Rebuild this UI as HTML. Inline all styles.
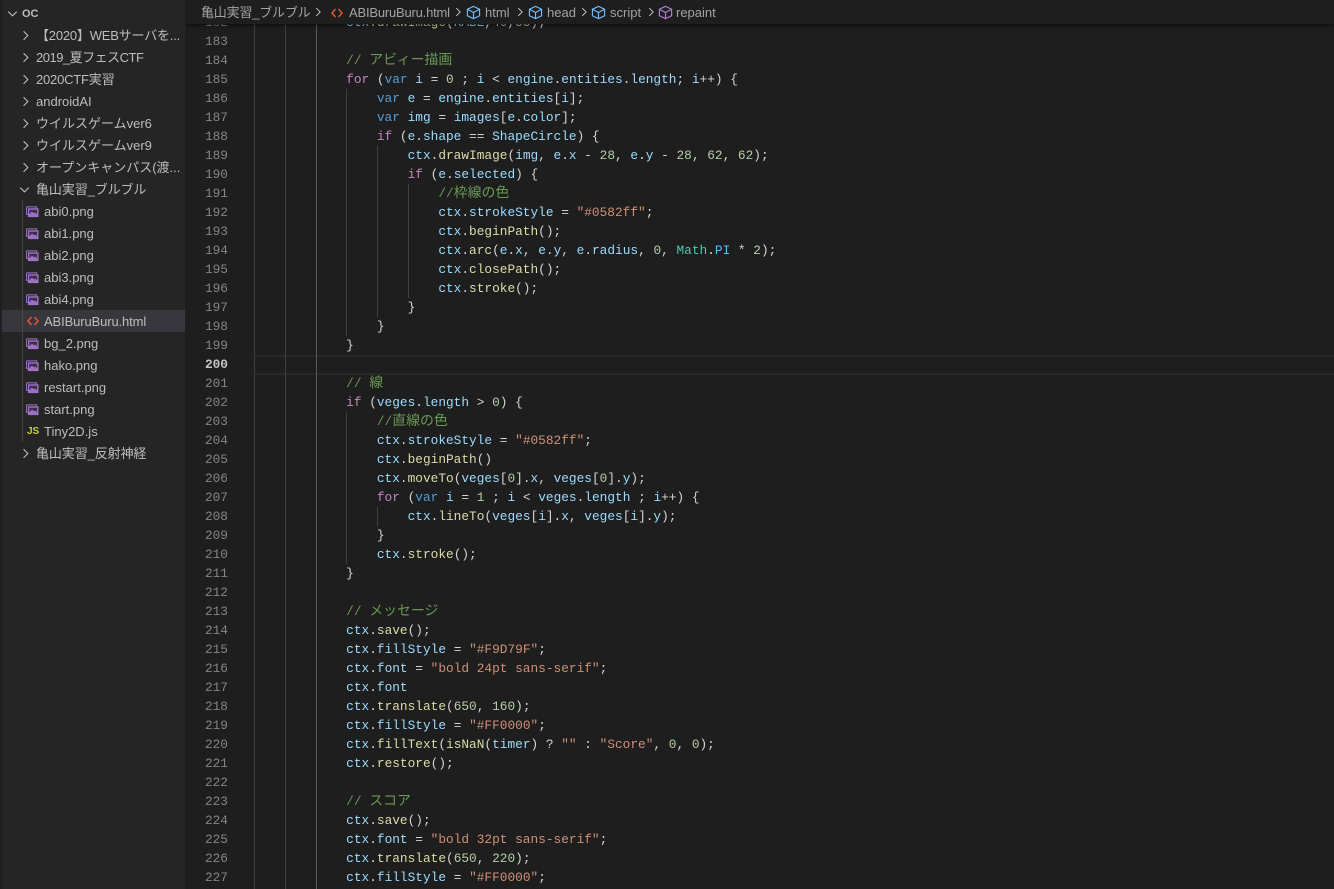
<!DOCTYPE html>
<html lang="ja"><head><meta charset="utf-8"><title>ABIBuruBuru.html</title>
<style>
html,body{margin:0;padding:0;width:1334px;height:889px;overflow:hidden;background:#1e1e1e}
body{position:relative;font-family:"Liberation Sans","Noto Sans CJK JP",sans-serif}
#side{position:absolute;left:0;top:0;width:185px;height:889px;background:#252526;box-sizing:border-box}
.r{position:absolute;left:0;height:22px;line-height:22px;font-size:13px;color:#bdbdbd;white-space:nowrap;width:185px}
.r span{position:absolute;top:1px}
.t{left:36px}.f{left:44px}
.r svg{position:absolute}
.sel{position:absolute;left:2px;top:310px;width:183px;height:22px;background:#37373d}
#tg{position:absolute;left:22px;top:200px;width:1px;height:242px;background:#454545}
#code{position:absolute;left:254px;top:13px;margin:0;font:12.8px/19px "Liberation Mono","Noto Sans CJK JP",monospace;color:#d4d4d4;white-space:pre}
#nums{position:absolute;left:190px;width:38px;top:13px;text-align:right;font:12.8px/19px "Liberation Mono",monospace;color:#858585}
#nums b{font-weight:bold;color:#c6c6c6}
.g{position:absolute;width:1px;background:#404040}
#cur{position:absolute;left:254px;top:355px;width:1080px;height:16px;border-top:2px solid #282828;border-bottom:2px solid #282828}
#head{position:absolute;left:185px;top:0;width:1149px;height:24px;background:#1e1e1e;box-shadow:0 1px 4px rgba(0,0,0,.7);font-size:13px;color:#a3a3a3}
#head span,#head svg{position:absolute}
#head span{top:3px;line-height:20px;white-space:nowrap}
.k{color:#c586c0}.v{color:#569cd6}.i{color:#9cdcfe}.m{color:#dcdcaa}.s{color:#ce9178}.n{color:#b5cea8}.y{color:#4ec9b0}.o{color:#4fc1ff}
.c{color:#6a9955;display:inline-block;height:19px;line-height:19px;vertical-align:top}
.j{font-size:13.9px;line-height:19px}
</style></head><body>
<svg width="0" height="0" style="position:absolute"><defs>
<symbol id="chr" viewBox="0 0 16 16"><path d="M6 3.500 10.500 8 6 12.500" fill="none" stroke="#c5c5c5" stroke-width="1.100"/></symbol>
<symbol id="chd" viewBox="0 0 16 16"><path d="M3.500 6 8 10.500 12.500 6" fill="none" stroke="#c5c5c5" stroke-width="1.100"/></symbol>
<symbol id="img" viewBox="0 0 14 12"><path d="M.5 .5H11.500V2" fill="none" stroke="#a074c4" stroke-width="1"/><path d="M.5 .5V8.500H2" fill="none" stroke="#a074c4" stroke-width="1"/><rect x="2" y="2" width="11.500" height="9.500" fill="#a074c4"/><rect x="3.500" y="3.500" width="8.500" height="5" fill="#3c2f4c"/><path d="M3.500 8.500 6.500 5.500 8.500 7.500 10 6.500 12 8.500Z" fill="#a074c4"/></symbol>
<symbol id="htm" viewBox="0 0 12 10"><path d="M4.500 1 1 5 4.500 9M7.500 1 11 5 7.500 9" fill="none" stroke="#e1562e" stroke-width="1.500"/></symbol>
<symbol id="cube" viewBox="0 0 16 16"><path d="M8 1.500 14.500 4.500V11.500L8 14.500 1.500 11.500V4.500ZM1.500 4.500 8 8 14.500 4.500M8 8V14.500" fill="none" stroke="currentColor" stroke-width="1.200"/></symbol>
</defs></svg>

<div id="nums">182<br>183<br>184<br>185<br>186<br>187<br>188<br>189<br>190<br>191<br>192<br>193<br>194<br>195<br>196<br>197<br>198<br>199<br><b>200</b><br>201<br>202<br>203<br>204<br>205<br>206<br>207<br>208<br>209<br>210<br>211<br>212<br>213<br>214<br>215<br>216<br>217<br>218<br>219<br>220<br>221<br>222<br>223<br>224<br>225<br>226<br>227</div>

<div id="cur"></div>
<div class="g" style="left:254px;top:0;height:889px"></div>
<div class="g" style="left:285px;top:0;height:889px"></div>
<div class="g" style="left:316px;top:0;height:889px;background:#5a5a5a"></div>
<div class="g" style="left:346px;top:89px;height:247px"></div>
<div class="g" style="left:377px;top:146px;height:171px"></div>
<div class="g" style="left:408px;top:184px;height:114px"></div>
<div class="g" style="left:346px;top:412px;height:152px"></div>
<div class="g" style="left:377px;top:507px;height:19px"></div>

<pre id="code">            <span class="i">ctx</span>.<span class="m">drawImage</span>(<span class="i">KABE</span>,<span class="n">40</span>,<span class="n">55</span>);

            <span class="c">// <span class="j">アビィー描画</span></span>
            <span class="k">for</span> (<span class="v">var</span> <span class="i">i</span> = <span class="n">0</span> ; <span class="i">i</span> &lt; <span class="i">engine</span>.<span class="i">entities</span>.<span class="i">length</span>; <span class="i">i</span>++) {
                <span class="v">var</span> <span class="i">e</span> = <span class="i">engine</span>.<span class="i">entities</span>[<span class="i">i</span>];
                <span class="v">var</span> <span class="i">img</span> = <span class="i">images</span>[<span class="i">e</span>.<span class="i">color</span>];
                <span class="k">if</span> (<span class="i">e</span>.<span class="i">shape</span> == <span class="i">ShapeCircle</span>) {
                    <span class="i">ctx</span>.<span class="m">drawImage</span>(<span class="i">img</span>, <span class="i">e</span>.<span class="i">x</span> - <span class="n">28</span>, <span class="i">e</span>.<span class="i">y</span> - <span class="n">28</span>, <span class="n">62</span>, <span class="n">62</span>);
                    <span class="k">if</span> (<span class="i">e</span>.<span class="i">selected</span>) {
                        <span class="c">//<span class="j">枠線の色</span></span>
                        <span class="i">ctx</span>.<span class="i">strokeStyle</span> = <span class="s">"#0582ff"</span>;
                        <span class="i">ctx</span>.<span class="m">beginPath</span>();
                        <span class="i">ctx</span>.<span class="m">arc</span>(<span class="i">e</span>.<span class="i">x</span>, <span class="i">e</span>.<span class="i">y</span>, <span class="i">e</span>.<span class="i">radius</span>, <span class="n">0</span>, <span class="y">Math</span>.<span class="o">PI</span> * <span class="n">2</span>);
                        <span class="i">ctx</span>.<span class="m">closePath</span>();
                        <span class="i">ctx</span>.<span class="m">stroke</span>();
                    }
                }
            }

            <span class="c">// <span class="j">線</span></span>
            <span class="k">if</span> (<span class="i">veges</span>.<span class="i">length</span> &gt; <span class="n">0</span>) {
                <span class="c">//<span class="j">直線の色</span></span>
                <span class="i">ctx</span>.<span class="i">strokeStyle</span> = <span class="s">"#0582ff"</span>;
                <span class="i">ctx</span>.<span class="m">beginPath</span>()
                <span class="i">ctx</span>.<span class="m">moveTo</span>(<span class="i">veges</span>[<span class="n">0</span>].<span class="i">x</span>, <span class="i">veges</span>[<span class="n">0</span>].<span class="i">y</span>);
                <span class="k">for</span> (<span class="v">var</span> <span class="i">i</span> = <span class="n">1</span> ; <span class="i">i</span> &lt; <span class="i">veges</span>.<span class="i">length</span> ; <span class="i">i</span>++) {
                    <span class="i">ctx</span>.<span class="m">lineTo</span>(<span class="i">veges</span>[<span class="i">i</span>].<span class="i">x</span>, <span class="i">veges</span>[<span class="i">i</span>].<span class="i">y</span>);
                }
                <span class="i">ctx</span>.<span class="m">stroke</span>();
            }

            <span class="c">// <span class="j">メッセージ</span></span>
            <span class="i">ctx</span>.<span class="m">save</span>();
            <span class="i">ctx</span>.<span class="i">fillStyle</span> = <span class="s">"#F9D79F"</span>;
            <span class="i">ctx</span>.<span class="i">font</span> = <span class="s">"bold 24pt sans-serif"</span>;
            <span class="i">ctx</span>.<span class="i">font</span>
            <span class="i">ctx</span>.<span class="m">translate</span>(<span class="n">650</span>, <span class="n">160</span>);
            <span class="i">ctx</span>.<span class="i">fillStyle</span> = <span class="s">"#FF0000"</span>;
            <span class="i">ctx</span>.<span class="m">fillText</span>(<span class="m">isNaN</span>(<span class="i">timer</span>) ? <span class="s">""</span> : <span class="s">"Score"</span>, <span class="n">0</span>, <span class="n">0</span>);
            <span class="i">ctx</span>.<span class="m">restore</span>();

            <span class="c">// <span class="j">スコア</span></span>
            <span class="i">ctx</span>.<span class="m">save</span>();
            <span class="i">ctx</span>.<span class="i">font</span> = <span class="s">"bold 32pt sans-serif"</span>;
            <span class="i">ctx</span>.<span class="m">translate</span>(<span class="n">650</span>, <span class="n">220</span>);
            <span class="i">ctx</span>.<span class="i">fillStyle</span> = <span class="s">"#FF0000"</span>;</pre>

<div id="head">
<span style="left:16px;letter-spacing:-.2px">亀山実習_ブルブル</span>
<svg style="left:126px;top:5px" width="14" height="14"><use href="#chr"/></svg>
<svg style="left:146px;top:8px" width="12" height="10"><use href="#htm"/></svg>
<span style="left:164px;letter-spacing:-.2px">ABIBuruBuru.html</span>
<svg style="left:266px;top:5px" width="14" height="14"><use href="#chr"/></svg>
<svg style="left:281px;top:5px;color:#75beff" width="15" height="15"><use href="#cube"/></svg>
<span style="left:300px">html</span>
<svg style="left:328px;top:5px" width="14" height="14"><use href="#chr"/></svg>
<svg style="left:343px;top:5px;color:#75beff" width="15" height="15"><use href="#cube"/></svg>
<span style="left:362px">head</span>
<svg style="left:392px;top:5px" width="14" height="14"><use href="#chr"/></svg>
<svg style="left:406px;top:5px;color:#75beff" width="15" height="15"><use href="#cube"/></svg>
<span style="left:425px">script</span>
<svg style="left:459px;top:5px" width="14" height="14"><use href="#chr"/></svg>
<svg style="left:473px;top:5px;color:#b180d7" width="15" height="15"><use href="#cube"/></svg>
<span style="left:491px">repaint</span>
</div>

<div id="side">
<div style="position:absolute;left:0;top:0;width:2px;height:889px;background:#1f1f1f"></div>
<div class="sel"></div>
<div id="tg"></div>
<div class="r" style="top:2px"><svg style="left:5px;top:4px" width="15" height="15"><use href="#chd"/></svg><span style="left:22px;font-size:11px;font-weight:bold">OC</span></div>
<div class="r" style="top:24px"><svg style="left:18px;top:4px" width="15" height="15"><use href="#chr"/></svg><span class="t" style="left:36px;letter-spacing:-.2px">【2020】WEBサーバを...</span></div>
<div class="r" style="top:46px"><svg style="left:18px;top:4px" width="15" height="15"><use href="#chr"/></svg><span class="t" style="letter-spacing:-.5px">2019_夏フェスCTF</span></div>
<div class="r" style="top:68px"><svg style="left:18px;top:4px" width="15" height="15"><use href="#chr"/></svg><span class="t" style="letter-spacing:-.2px">2020CTF実習</span></div>
<div class="r" style="top:90px"><svg style="left:18px;top:4px" width="15" height="15"><use href="#chr"/></svg><span class="t">androidAI</span></div>
<div class="r" style="top:112px"><svg style="left:18px;top:4px" width="15" height="15"><use href="#chr"/></svg><span class="t">ウイルスゲームver6</span></div>
<div class="r" style="top:134px"><svg style="left:18px;top:4px" width="15" height="15"><use href="#chr"/></svg><span class="t">ウイルスゲームver9</span></div>
<div class="r" style="top:156px"><svg style="left:18px;top:4px" width="15" height="15"><use href="#chr"/></svg><span class="t">オープンキャンパス(渡...</span></div>
<div class="r" style="top:178px"><svg style="left:17px;top:4px" width="15" height="15"><use href="#chd"/></svg><span class="t" style="letter-spacing:-.1px">亀山実習_ブルブル</span></div>
<div class="r" style="top:200px"><svg style="left:26px;top:6px" width="13" height="12"><use href="#img"/></svg><span class="f">abi0.png</span></div>
<div class="r" style="top:222px"><svg style="left:26px;top:6px" width="13" height="12"><use href="#img"/></svg><span class="f">abi1.png</span></div>
<div class="r" style="top:244px"><svg style="left:26px;top:6px" width="13" height="12"><use href="#img"/></svg><span class="f">abi2.png</span></div>
<div class="r" style="top:266px"><svg style="left:26px;top:6px" width="13" height="12"><use href="#img"/></svg><span class="f">abi3.png</span></div>
<div class="r" style="top:288px"><svg style="left:26px;top:6px" width="13" height="12"><use href="#img"/></svg><span class="f">abi4.png</span></div>
<div class="r" style="top:310px"><svg style="left:27px;top:6px" width="12" height="10"><use href="#htm"/></svg><span class="f" style="letter-spacing:-.12px">ABIBuruBuru.html</span></div>
<div class="r" style="top:332px"><svg style="left:26px;top:6px" width="13" height="12"><use href="#img"/></svg><span class="f">bg_2.png</span></div>
<div class="r" style="top:354px"><svg style="left:26px;top:6px" width="13" height="12"><use href="#img"/></svg><span class="f">hako.png</span></div>
<div class="r" style="top:376px"><svg style="left:26px;top:6px" width="13" height="12"><use href="#img"/></svg><span class="f">restart.png</span></div>
<div class="r" style="top:398px"><svg style="left:26px;top:6px" width="13" height="12"><use href="#img"/></svg><span class="f">start.png</span></div>
<div class="r" style="top:420px"><span style="left:27px;font-size:10px;font-weight:bold;color:#cbcb41">JS</span><span class="f">Tiny2D.js</span></div>
<div class="r" style="top:442px"><svg style="left:18px;top:4px" width="15" height="15"><use href="#chr"/></svg><span class="t" style="letter-spacing:-.1px">亀山実習_反射神経</span></div>
</div>
</body></html>
